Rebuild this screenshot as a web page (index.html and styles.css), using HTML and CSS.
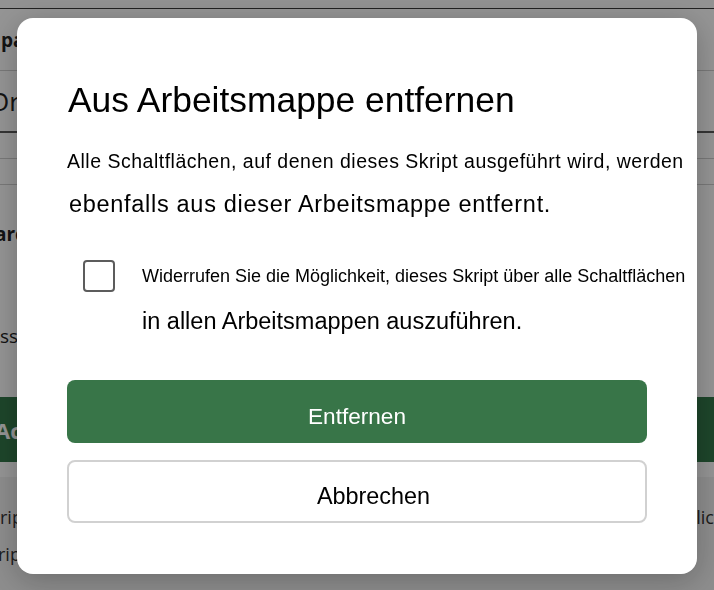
FILE: index.html
```html
<!DOCTYPE html>
<html lang="de">
<head>
  <meta charset="UTF-8" />
  <meta name="viewport" content="width=device-width, initial-scale=1.0" />
  <title>Aus Arbeitsmappe entfernen</title>
  <link rel="stylesheet" href="styles.css">
</head>
<body>
  <!-- Script pane behind the dialog -->
  <div class="pane">
    <div class="pane-top"></div>
    <div class="row row-head"><span class="bold">paket</span></div>
    <div class="row row-title"><span class="cut-wide">Ordner</span></div>
    <div class="row row-empty"></div>
    <div class="row row-empty"></div>
    <div class="section">
      <div class="section-label bold"><span class="cut">arent</span></div>
      <div class="section-text">ssen</div>
    </div>
    <div class="pane-action"><span class="cut">Access</span></div>
    <div class="pane-spacer"></div>
    <div class="pane-list">
      <div class="list-row">
        <span>ript</span>
        <span class="list-right">lich</span>
      </div>
      <div class="list-row"><span class="cut-small">ript</span></div>
    </div>
  </div>

  <!-- Dialog -->
  <div class="overlay">
    <div class="dialog" role="dialog" aria-labelledby="dialogTitle">
      <h1 id="dialogTitle">Aus Arbeitsmappe entfernen</h1>
      <p class="line line-a">Alle Schaltflächen, auf denen dieses Skript ausgeführt wird, werden</p>
      <p class="line line-b">ebenfalls aus dieser Arbeitsmappe entfernt.</p>

      <label class="check-row">
        <input type="checkbox" class="check" />
        <span class="check-text">
          <span class="check-a">Widerrufen Sie die Möglichkeit, dieses Skript über alle Schaltflächen</span>
          <span class="check-b">in allen Arbeitsmappen auszuführen.</span>
        </span>
      </label>

      <button type="button" class="btn btn-primary">Entfernen</button>
      <button type="button" class="btn btn-secondary">Abbrechen</button>
    </div>
  </div>
</body>
</html>
```

FILE: styles.css
```css
/* Global styles */
* {
  box-sizing: border-box;
  margin: 0;
  padding: 0;
}
body {
  font-family: 'Open Sans', 'Noto Sans', sans-serif;
  background-color: #ffffff;
  color: #222;
  width: 714px;
  height: 590px;
  overflow: hidden;
}

/* Pane behind the dialog */
.pane {
  height: 590px;
  overflow: hidden;
}
.pane-top {
  height: 9px;
  background-color: #fbfbfb;
  border-bottom: 1px solid #3a3a3a;
}
.row {
  display: flex;
  align-items: center;
  white-space: nowrap;
}
.row-head {
  height: 62px;
  font-size: 19px;
  padding-left: 1px;
  border-bottom: 1px solid #cfcfcf;
}
.row-title {
  height: 62px;
  font-size: 26px;
  border-bottom: 2px solid #5a5a5a;
}
.row-empty {
  height: 26px;
  border-bottom: 1px solid #cfcfcf;
}
.bold {
  font-weight: 700;
}
.cut {
  margin-left: -5px;
}
.cut-wide {
  margin-left: -11px;
}
.cut-small {
  margin-left: -2px;
}
.section {
  height: 212px;
  padding-top: 36px;
  font-size: 19px;
  white-space: nowrap;
}
.section-text {
  margin-top: 76px;
}
.pane-action {
  height: 65px;
  display: flex;
  align-items: center;
  background-color: #33784a;
  color: #ffffff;
  font-size: 22px;
  font-weight: 700;
  white-space: nowrap;
}
.pane-spacer {
  height: 15px;
}
.pane-list {
  background-color: #f3f3f3;
  height: 200px;
  padding-top: 28px;
  font-size: 18px;
  color: #333;
}
.list-row {
  display: flex;
  justify-content: space-between;
  height: 37px;
  white-space: nowrap;
}
.list-right {
  margin-right: -11px;
}

/* Dialog */
.overlay {
  position: fixed;
  inset: 0;
  background-color: rgba(0, 0, 0, 0.42);
  display: flex;
  justify-content: center;
  align-items: flex-start;
  padding-top: 18px;
}
.dialog {
  width: 680px;
  height: 556px;
  background-color: #ffffff;
  border-radius: 16px;
  box-shadow: 0 6px 30px rgba(0, 0, 0, 0.25);
  padding: 62px 50px 51px;
  font-family: 'Liberation Sans', Arial, sans-serif;
  color: #000;
  display: flex;
  flex-direction: column;
}
h1 {
  font-size: 35.4px;
  font-weight: 400;
  line-height: 40px;
  margin-left: 1px;
  white-space: nowrap;
}
.line {
  white-space: nowrap;
}
.line-a {
  margin-top: 29px;
  font-size: 19.5px;
  line-height: 24px;
  letter-spacing: 0.5px;
}
.line-b {
  margin-top: 17px;
  margin-left: 2px;
  font-size: 23.5px;
  line-height: 28px;
  letter-spacing: 0.7px;
}
.check-row {
  display: flex;
  margin-top: 42px;
  padding-left: 16px;
  cursor: pointer;
}
.check {
  appearance: none;
  flex: none;
  width: 32px;
  height: 32px;
  border: 2px solid #5c5c5c;
  border-radius: 4px;
  background-color: #fff;
}
.check-text {
  display: flex;
  flex-direction: column;
  gap: 20px;
  padding-top: 5px;
  margin-left: 27px;
  white-space: nowrap;
}
.check-a {
  font-size: 18px;
  line-height: 22px;
}
.check-b {
  font-size: 23.5px;
  line-height: 28px;
}
.btn {
  height: 63px;
  border-radius: 8px;
  font-family: 'Liberation Sans', Arial, sans-serif;
  cursor: pointer;
}
.btn-primary {
  margin-top: 45px;
  padding-top: 10px;
  font-size: 22.6px;
  background-color: #387548;
  color: #ffffff;
  border: none;
}
.btn-secondary {
  margin-top: 17px;
  padding-top: 9px;
  padding-left: 33px;
  font-size: 23.4px;
  background-color: #ffffff;
  color: #000;
  border: 2px solid #d1d1d1;
}
```
